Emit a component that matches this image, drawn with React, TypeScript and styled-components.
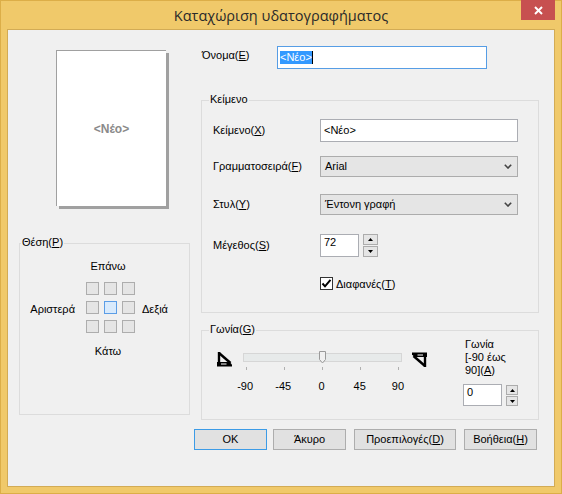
import React from "react";
import styled, { createGlobalStyle } from "styled-components";

const Global = createGlobalStyle`
  html, body { margin: 0; padding: 0; background: #ffffff; }
  body {
    font-family: "Liberation Sans", Arial, sans-serif;
    font-size: 11px;
    color: #000;
  }
  * { box-sizing: border-box; }
  u { text-decoration: underline; text-underline-offset: 1px; }
`;

const Window = styled.div`
  width: 562px;
  height: 494px;
  background: #f0c96a;
  border: 1px solid #dcae48;
  padding: 0 6px 6px;
  display: flex;
  flex-direction: column;
`;

const TitleBar = styled.div`
  height: 28px;
  display: grid;
  grid-template-columns: 1fr auto 1fr;
  align-items: start;
`;

const Title = styled.div`
  grid-column: 2;
  font-family: "Open Sans", "Noto Sans", sans-serif;
  font-size: 14.5px;
  line-height: 29px;
  color: #2a2a2a;
  white-space: nowrap;
`;

const CloseButton = styled.div`
  grid-column: 3;
  justify-self: end;
  width: 34px;
  height: 20px;
  margin-top: -1px;
  background: #c75050;
  display: flex;
  align-items: center;
  justify-content: center;
`;

const Client = styled.div`
  flex: 1;
  background: #f0f0f0;
  border: 1px solid #d2ab55;
  display: flex;
  flex-direction: column;
`;

const MainGrid = styled.div`
  display: grid;
  grid-template-columns: 171px 338px;
  column-gap: 11px;
  padding-left: 11px;
  align-items: start;
`;

const Column = styled.div`
  display: flex;
  flex-direction: column;
`;

const Page = styled.div`
  margin: 20px 0 0 37px;
  width: 110px;
  height: 156px;
  background: #ffffff;
  border-top: 1px solid #a0a0a0;
  border-left: 1px solid #a0a0a0;
  box-shadow: 3px 3px 0 #a0a0a0;
  display: flex;
  align-items: center;
  justify-content: center;
  font-weight: bold;
  font-size: 12px;
  color: #8a8a8a;
`;

const Group = styled.div<{ $h: number; $mt: number }>`
  position: relative;
  border: 1px solid #dcdcdc;
  height: ${(p) => p.$h}px;
  margin-top: ${(p) => p.$mt}px;
`;

const GroupLabel = styled.span<{ $left: number }>`
  position: absolute;
  top: -8px;
  left: ${(p) => p.$left}px;
  background: #f0f0f0;
  padding: 0 1px;
  line-height: 13px;
  white-space: nowrap;
`;

/* Position group */
const PosGrid = styled.div`
  display: grid;
  grid-template-columns: 58px 49px auto;
  padding: 16px 0 0 8px;
  line-height: 13px;
`;

const PosCaption = styled.div<{ $row: number; $mt: number }>`
  grid-column: 2;
  grid-row: ${(p) => p.$row};
  justify-self: center;
  margin-right: 5px;
  margin-top: ${(p) => p.$mt}px;
  white-space: nowrap;
`;

const SideLabel = styled.div<{ $side: "left" | "right" }>`
  grid-row: 2;
  grid-column: ${(p) => (p.$side === "left" ? 1 : 3)};
  align-self: center;
  text-align: ${(p) => (p.$side === "left" ? "right" : "left")};
  padding-${(p) => (p.$side === "left" ? "right" : "left")}: ${(p) =>
    p.$side === "left" ? 11 : 7}px;
  padding-top: 12px;
  white-space: nowrap;
`;

const Squares = styled.div`
  grid-row: 2;
  grid-column: 2;
  margin-top: 9px;
  display: grid;
  grid-template-columns: repeat(3, 13px);
  grid-template-rows: repeat(3, 13px);
  column-gap: 5px;
  row-gap: 6px;
`;

const Square = styled.div<{ $on?: boolean }>`
  width: 13px;
  height: 13px;
  border: 1px solid ${(p) => (p.$on ? "#5b9de6" : "#adadad")};
  background: ${(p) => (p.$on ? "#d8eafc" : "#e5e5e5")};
`;

/* Right column */
const NameRow = styled.div`
  margin-top: 16px;
  display: grid;
  grid-template-columns: 76px 210px;
`;

const NameLabel = styled.div`
  padding: 3px 0 0 1px;
  line-height: 13px;
`;

const NameInput = styled.div`
  height: 23px;
  border: 1px solid #569de5;
  background: #fff;
  padding: 0 2px;
  display: flex;
  align-items: center;
`;

const Selected = styled.span`
  background: #3399ff;
  color: #fff;
  line-height: 13px;
`;

const Caret = styled.span`
  width: 1px;
  height: 13px;
  background: #000;
`;

const GroupBody = styled.div`
  display: flex;
  flex-direction: column;
  padding-left: 11px;
`;

const FieldRow = styled.div<{ $mt: number; $h: number }>`
  display: grid;
  grid-template-columns: 107px 198px;
  align-items: center;
  margin-top: ${(p) => p.$mt}px;
  height: ${(p) => p.$h}px;
`;

const FieldLabel = styled.div`
  line-height: 13px;
  white-space: nowrap;
`;

const TextBox = styled.div<{ $w?: number; $top?: boolean }>`
  width: ${(p) => (p.$w ? `${p.$w}px` : "100%")};
  height: 100%;
  border: 1px solid #abadb3;
  background: #fff;
  padding: ${(p) => (p.$top ? "1px 3px 0" : "0 3px")};
  display: flex;
  align-items: ${(p) => (p.$top ? "flex-start" : "center")};
  line-height: 13px;
`;

const Combo = styled.div`
  height: 100%;
  border: 1px solid #acacac;
  background: #e5e5e5;
  padding: 0 5px 0 4px;
  display: flex;
  align-items: center;
  justify-content: space-between;
  line-height: 13px;
`;

const SpinWrap = styled.div`
  display: flex;
  align-items: flex-start;
  height: 100%;
`;

const Spinner = styled.div<{ $w: number; $h: number; $ml: number; $mt?: number }>`
  width: ${(p) => p.$w}px;
  height: ${(p) => p.$h}px;
  margin-left: ${(p) => p.$ml}px;
  margin-top: ${(p) => p.$mt ?? 0}px;
  display: flex;
  flex-direction: column;
  gap: 1px;
`;

const SpinButton = styled.div`
  flex: 1;
  border: 1px solid #acacac;
  background: #e5e5e5;
  display: flex;
  align-items: center;
  justify-content: center;
`;

const CheckRow = styled.div`
  grid-column: 2;
  display: flex;
  align-items: center;
  gap: 3px;
`;

const CheckBox = styled.div`
  width: 13px;
  height: 13px;
  border: 1px solid #333;
  background: #fff;
  display: flex;
  align-items: center;
  justify-content: center;
`;

/* Angle group */
const AngleBody = styled.div`
  display: flex;
  align-items: flex-start;
  padding-left: 15px;
`;

const SliderBlock = styled.div`
  margin-top: 21px;
  display: flex;
  align-items: flex-start;
`;

const TrackArea = styled.div`
  margin-left: 11px;
  width: 159px;
  display: flex;
  flex-direction: column;
`;

const Track = styled.div`
  position: relative;
  margin-top: 1px;
  height: 9px;
  border: 1px solid #d6d6d6;
  background: #e7eaea;
`;

const Thumb = styled.svg`
  position: absolute;
  left: 75px;
  top: -3px;
`;

const Ticks = styled.div`
  margin-top: 5px;
  height: 3px;
  padding: 0 3px;
  display: flex;
  justify-content: space-between;
`;

const Tick = styled.div`
  width: 1px;
  height: 3px;
  background: #b0b0b0;
`;

const TickLabels = styled.div`
  margin: 10px 0 0 -17px;
  width: 191px;
  display: grid;
  grid-template-columns: repeat(5, 1fr);
  text-align: center;
  line-height: 13px;
`;

const RotIcon = styled.svg<{ $ml: number; $flip?: boolean }>`
  margin-left: ${(p) => p.$ml}px;
  transform: ${(p) => (p.$flip ? "rotate(180deg)" : "none")};
`;

const AngleSide = styled.div`
  margin: 7px 0 0 36px;
  display: flex;
  flex-direction: column;
`;

const AngleLabel = styled.div`
  padding-left: 2px;
  line-height: 13px;
`;

const AngleInputRow = styled.div`
  margin-top: 7px;
  display: flex;
  align-items: flex-start;
  height: 22px;
`;

/* Buttons */
const ButtonRow = styled.div`
  margin-top: 9px;
  display: flex;
  justify-content: flex-end;
  padding-right: 17px;
`;

const Button = styled.div<{ $w: number; $ml: number; $default?: boolean }>`
  width: ${(p) => p.$w}px;
  height: 21px;
  margin-left: ${(p) => p.$ml}px;
  border: 1px solid ${(p) => (p.$default ? "#3c9be6" : "#adadad")};
  background: #e1e1e1;
  display: flex;
  align-items: center;
  justify-content: center;
  line-height: 13px;
  white-space: nowrap;
`;

const UpArrow = () => (
  <svg width="5" height="3" viewBox="0 0 5 3">
    <polygon points="0,3 2.5,0 5,3" fill="#000" />
  </svg>
);
const DownArrow = () => (
  <svg width="5" height="3" viewBox="0 0 5 3">
    <polygon points="0,0 5,0 2.5,3" fill="#000" />
  </svg>
);

const Chevron = () => (
  <svg width="8" height="5" viewBox="0 0 8 5">
    <polyline points="0.8,0.8 4,4 7.2,0.8" fill="none" stroke="#444" strokeWidth="1.6" />
  </svg>
);

const RotateGlyph: React.FC<{ ml: number; flip?: boolean }> = ({ ml, flip }) => (
  <RotIcon $ml={ml} $flip={flip} width="15" height="15" viewBox="0 0 15 15">
    <line x1="2" y1="0" x2="2" y2="12" stroke="#000" strokeWidth="2.4" />
    <line x1="2" y1="1" x2="13.5" y2="11" stroke="#000" strokeWidth="2.4" />
    <polygon points="0,10 12.5,10 15,12.5 15,14.5 0,14.5" fill="#000" />
    <line x1="4" y1="12" x2="9.5" y2="12" stroke="#fff" strokeWidth="1" />
  </RotIcon>
);

const SpinPair: React.FC<{ w: number; h: number; ml: number; mt?: number }> = ({ w, h, ml, mt }) => (
  <Spinner $w={w} $h={h} $ml={ml} $mt={mt}>
    <SpinButton>
      <UpArrow />
    </SpinButton>
    <SpinButton>
      <DownArrow />
    </SpinButton>
  </Spinner>
);

export default function App() {
  return (
    <>
      <Global />
      <Window>
        <TitleBar>
          <Title>Καταχώριση υδατογραφήματος</Title>
          <CloseButton>
            <svg width="9" height="9" viewBox="0 0 9 9">
              <line x1="1" y1="1" x2="8" y2="8" stroke="#fff" strokeWidth="2" />
              <line x1="8" y1="1" x2="1" y2="8" stroke="#fff" strokeWidth="2" />
            </svg>
          </CloseButton>
        </TitleBar>
        <Client>
          <MainGrid>
            <Column>
              <Page>&lt;Νέο&gt;</Page>
              <Group $h={172} $mt={37}>
                <GroupLabel $left={1}>
                  Θέση(<u>P</u>)
                </GroupLabel>
                <PosGrid>
                  <PosCaption $row={1} $mt={0}>
                    Επάνω
                  </PosCaption>
                  <SideLabel $side="left">Αριστερά</SideLabel>
                  <Squares>
                    {Array.from({ length: 9 }).map((_, i) => (
                      <Square key={i} $on={i === 4} />
                    ))}
                  </Squares>
                  <SideLabel $side="right">Δεξιά</SideLabel>
                  <PosCaption $row={3} $mt={12}>
                    Κάτω
                  </PosCaption>
                </PosGrid>
              </Group>
            </Column>
            <Column>
              <NameRow>
                <NameLabel>
                  Όνομα(<u>E</u>)
                </NameLabel>
                <NameInput>
                  <Selected>&lt;Νέο&gt;</Selected>
                  <Caret />
                </NameInput>
              </NameRow>

              <Group $h={213} $mt={31}>
                <GroupLabel $left={7}>Κείμενο</GroupLabel>
                <GroupBody>
                  <FieldRow $mt={18} $h={23}>
                    <FieldLabel>
                      Κείμενο(<u>X</u>)
                    </FieldLabel>
                    <TextBox>&lt;Νέο&gt;</TextBox>
                  </FieldRow>
                  <FieldRow $mt={14} $h={21}>
                    <FieldLabel>
                      Γραμματοσειρά(<u>F</u>)
                    </FieldLabel>
                    <Combo>
                      <span>Arial</span>
                      <Chevron />
                    </Combo>
                  </FieldRow>
                  <FieldRow $mt={17} $h={21}>
                    <FieldLabel>
                      Στυλ(<u>Y</u>)
                    </FieldLabel>
                    <Combo>
                      <span>Έντονη γραφή</span>
                      <Chevron />
                    </Combo>
                  </FieldRow>
                  <FieldRow $mt={19} $h={23}>
                    <FieldLabel>
                      Μέγεθος(<u>S</u>)
                    </FieldLabel>
                    <SpinWrap>
                      <TextBox $w={39} $top>
                        72
                      </TextBox>
                      <SpinPair w={15} h={23} ml={4} />
                    </SpinWrap>
                  </FieldRow>
                  <FieldRow $mt={20} $h={13}>
                    <CheckRow>
                      <CheckBox>
                        <svg width="11" height="11" viewBox="0 0 11 11">
                          <polyline
                            points="1.5,5.5 4,8.3 9.5,1.8"
                            fill="none"
                            stroke="#000"
                            strokeWidth="2"
                          />
                        </svg>
                      </CheckBox>
                      <span>
                        Διαφανές(<u>T</u>)
                      </span>
                    </CheckRow>
                  </FieldRow>
                </GroupBody>
              </Group>

              <Group $h={90} $mt={17}>
                <GroupLabel $left={7}>
                  Γωνία(<u>G</u>)
                </GroupLabel>
                <AngleBody>
                  <SliderBlock>
                    <RotateGlyph ml={0} />
                    <TrackArea>
                      <Track>
                        <Thumb width="8" height="13" viewBox="0 0 8 13">
                          <polygon
                            points="0.5,0.5 6.5,0.5 6.5,8.5 3.5,12 0.5,8.5"
                            fill="#f0f0f0"
                            stroke="#9a9a9a"
                          />
                        </Thumb>
                      </Track>
                      <Ticks>
                        {[0, 1, 2, 3, 4].map((i) => (
                          <Tick key={i} />
                        ))}
                      </Ticks>
                      <TickLabels>
                        <span>-90</span>
                        <span>-45</span>
                        <span>0</span>
                        <span>45</span>
                        <span>90</span>
                      </TickLabels>
                    </TrackArea>
                    <RotateGlyph ml={10} flip />
                  </SliderBlock>
                  <AngleSide>
                    <AngleLabel>
                      Γωνία
                      <br />
                      [-90 έως
                      <br />
                      90](<u>A</u>)
                    </AngleLabel>
                    <AngleInputRow>
                      <TextBox $w={39} $top>
                        0
                      </TextBox>
                      <SpinPair w={12} h={21} ml={4} mt={1} />
                    </AngleInputRow>
                  </AngleSide>
                </AngleBody>
              </Group>
            </Column>
          </MainGrid>
          <ButtonRow>
            <Button $w={73} $ml={0} $default>
              OK
            </Button>
            <Button $w={73} $ml={6}>
              Άκυρο
            </Button>
            <Button $w={102} $ml={8}>
              Προεπιλογές(<u>D</u>)
            </Button>
            <Button $w={73} $ml={8}>
              Βοήθεια(<u>H</u>)
            </Button>
          </ButtonRow>
        </Client>
      </Window>
    </>
  );
}
